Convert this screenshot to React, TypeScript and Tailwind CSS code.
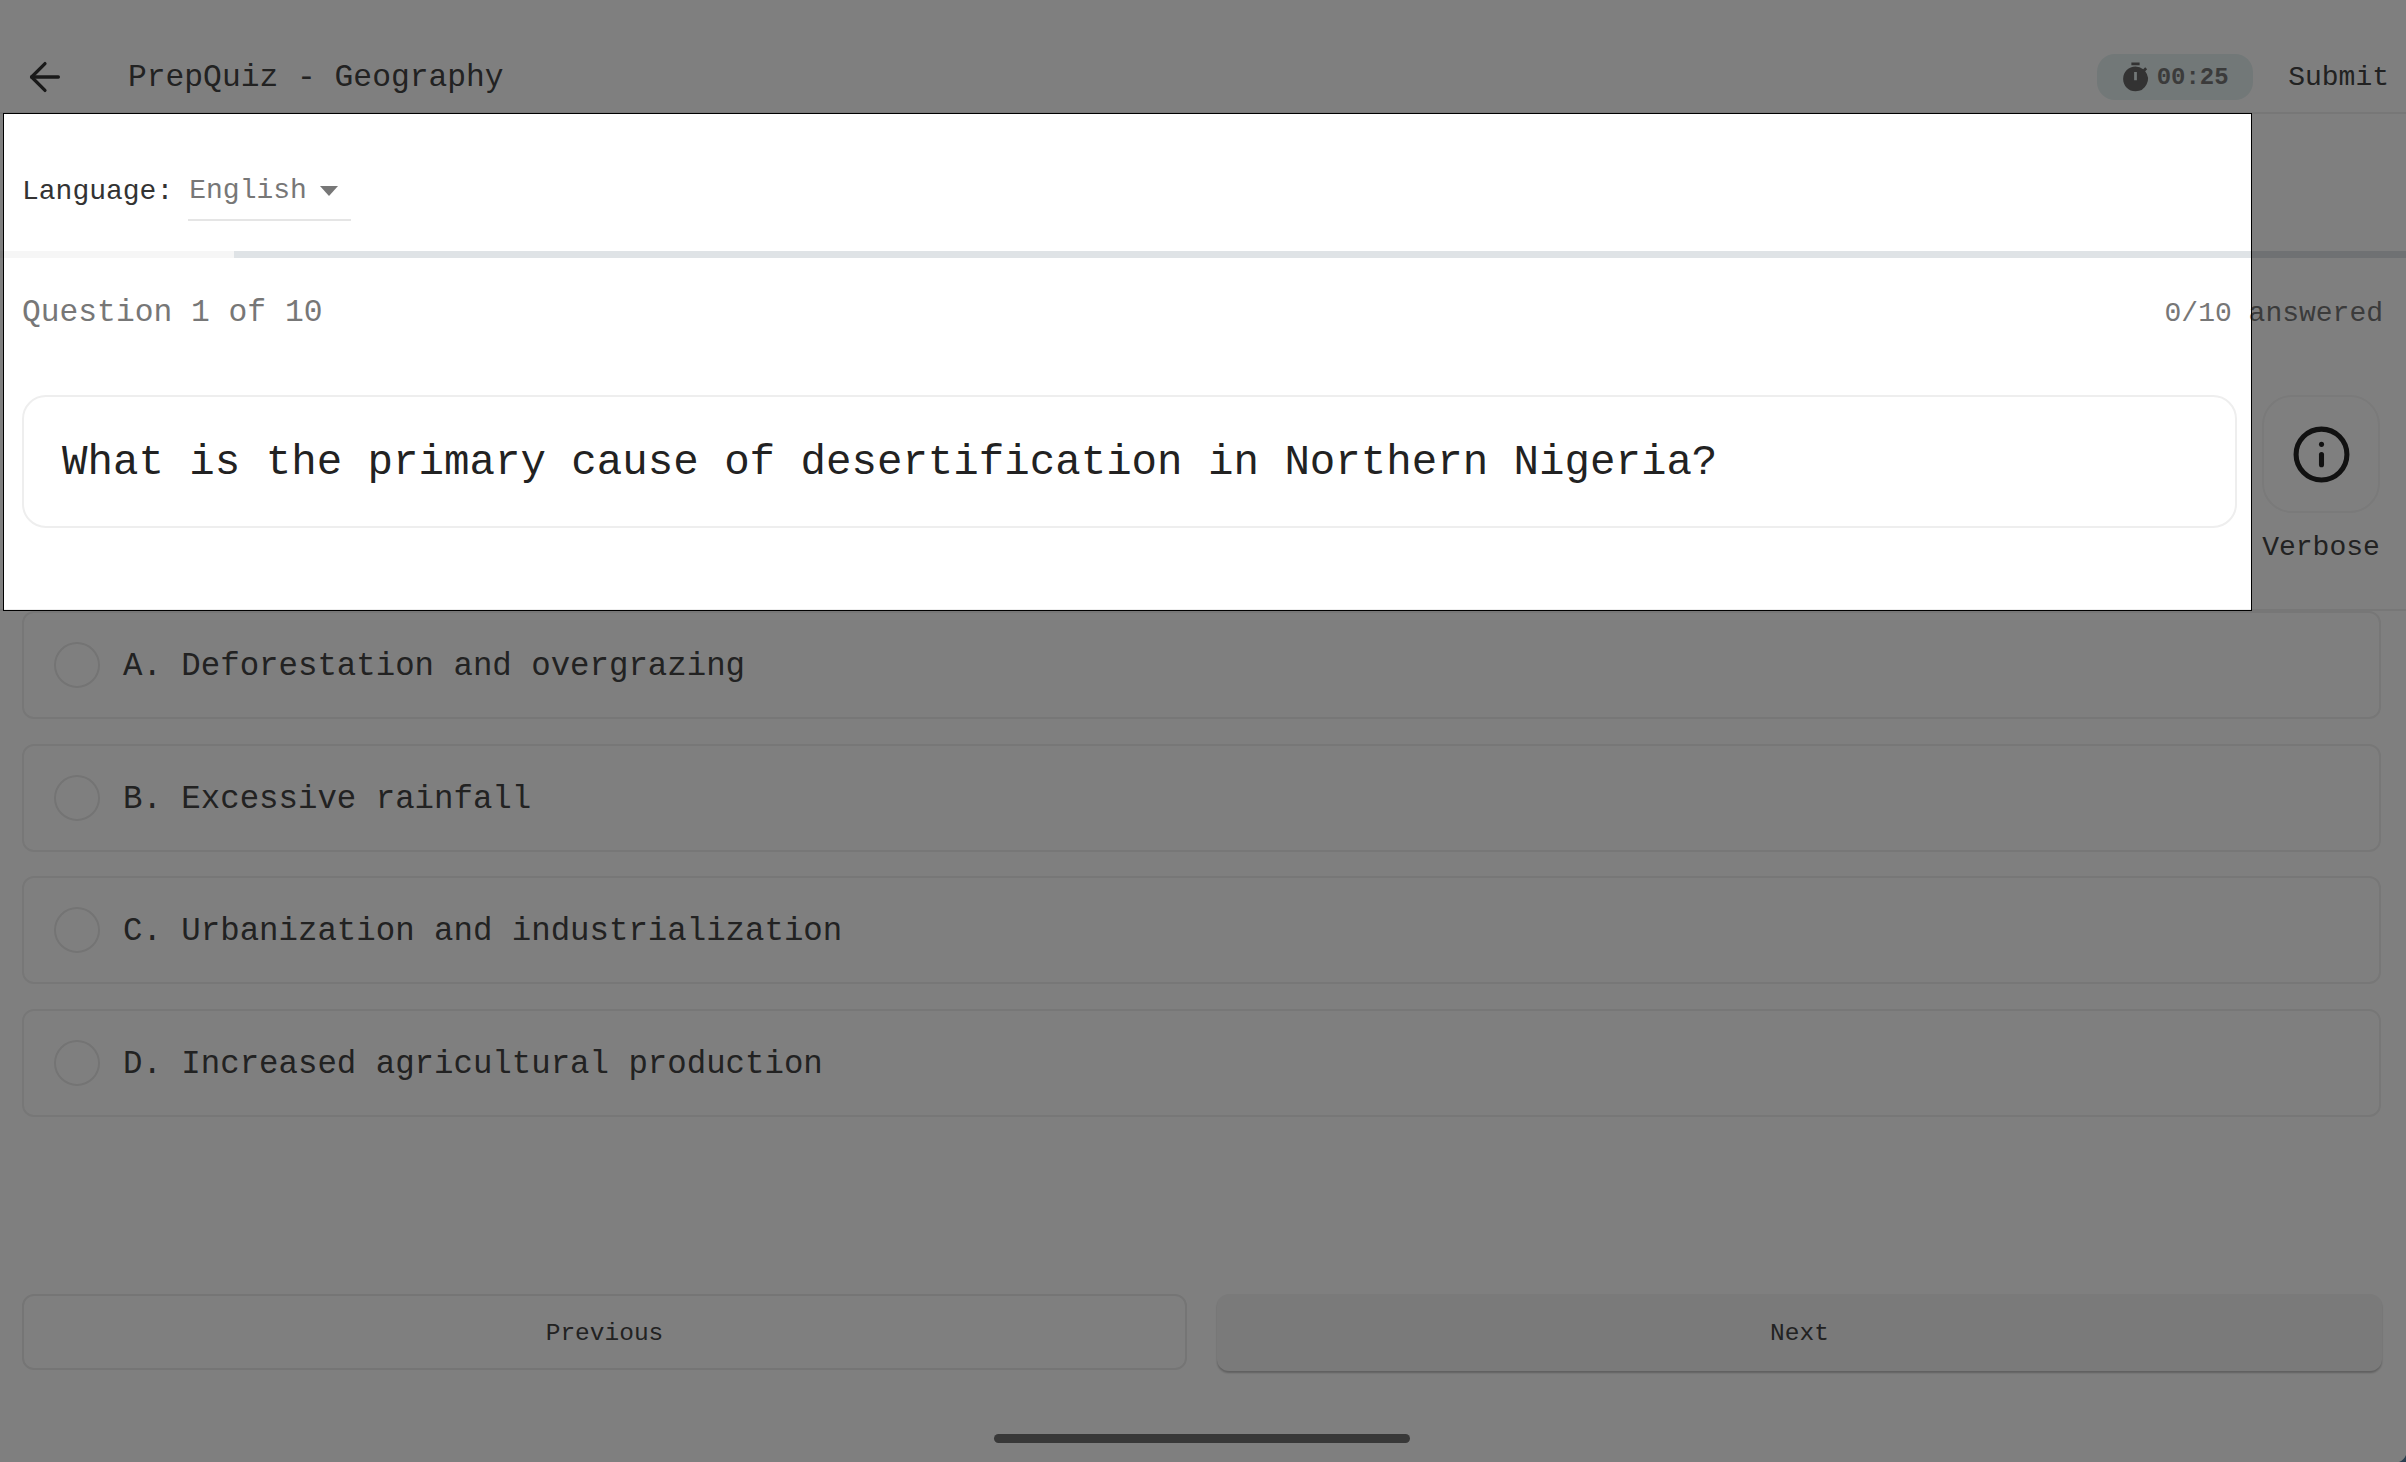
import { ArrowLeft, Info } from "lucide-react";
import { MdTimer } from "react-icons/md";

const OPTIONS = [
  "A. Deforestation and overgrazing",
  "B. Excessive rainfall",
  "C. Urbanization and industrialization",
  "D. Increased agricultural production",
];

export default function App() {
  return (
    <div className="relative h-[1462px] w-[2406px] overflow-hidden bg-white font-['Liberation_Mono',monospace] text-[#444]">
      <header className="flex h-[114px] items-center border-b-2 border-[#eee] pt-[42px] pl-[22px] pr-[17px]">
        <ArrowLeft size={46} strokeWidth={1.7} className="text-[#333]" />
        <h1 className="ml-[60px] pt-[3px] text-[31.3px]">PrepQuiz - Geography</h1>
        <div className="ml-auto flex h-[46px] w-[156px] items-center justify-center gap-[5px] rounded-[18px] bg-[#e4f0f0] pr-[3px]">
          <MdTimer size={33} className="text-[#666]" />
          <span className="pt-[2px] text-[24px] font-bold text-[#777]">00:25</span>
        </div>
        <button className="ml-[35px] pt-[2px] text-[28px]">Submit</button>
      </header>

      <section className="flex h-[137px] items-center gap-[15px] pl-[22px] pt-[19px]">
        <span className="text-[28px] text-[#333]">Language:</span>
        <div className="relative flex h-[58px] w-[163px] items-center border-b-2 border-[#e5e5e5] pl-[1px]">
          <span className="text-[28px] text-[#777]">English</span>
          <span className="ml-[13px] h-0 w-0 border-x-[9px] border-t-[10px] border-x-transparent border-t-[#777]" />
        </div>
      </section>

      <div className="h-[7px] w-full bg-[#dfe3e6]">
        <div className="h-full w-[234px] bg-[#f6f6f6]" />
      </div>

      <section className="flex h-[108px] items-center justify-between pl-[22px] pr-[23px] pt-[3px]">
        <span className="text-[31.3px] text-[#777]">Question 1 of 10</span>
        <span className="text-[28px] text-[#777]">0/10 answered</span>
      </section>

      <section className="flex h-[245px] gap-[25px] border-b-2 border-[#eee] pl-[22px] pr-[26px] pt-[29px]">
        <div className="flex h-[133px] flex-1 items-center rounded-[24px] border-2 border-[#eee] pl-[38px]">
          <p className="pt-[5px] text-[42.45px] text-[#222]">What is the primary cause of desertification in Northern Nigeria?</p>
        </div>
        <div className="flex w-[118px] flex-col items-center">
          <div className="flex h-[118px] w-[118px] items-center justify-center rounded-[30px] border-2 border-[#f4f4f4]">
            <Info size={61} strokeWidth={2} className="text-[#222]" />
          </div>
          <span className="mt-[18px] text-[28px] leading-[34px]">Verbose</span>
        </div>
      </section>

      <main className="flex flex-col gap-[24.5px] pl-[22px] pr-[25px]">
        {OPTIONS.map((option) => (
          <div key={option} className="flex h-[108px] items-center rounded-[12px] border-2 border-[#eee] pl-[30px]">
            <span className="h-[46px] w-[46px] rounded-full border-2 border-[#e8e8e8]" />
            <span className="ml-[23px] pt-[5px] text-[32.4px]">{option}</span>
          </div>
        ))}
      </main>

      <footer className="mt-[177px] grid grid-cols-2 gap-[30px] pl-[22px] pr-[24px]">
        <button className="flex h-[76px] items-center justify-center rounded-[12px] border-2 border-[#eaeaea] pt-[5px] text-[24.5px]">Previous</button>
        <button className="flex h-[77px] items-center justify-center rounded-[12px] bg-[#f4f4f4] pt-[5px] text-[24.5px] shadow-[0_2px_2px_rgba(0,0,0,0.25)]">Next</button>
      </footer>

      <div className="mx-auto mt-[63px] h-[9px] w-[416px] -translate-x-[1px] rounded-full bg-[#717171]" />

      {/* tour spotlight: the hole is the box, the dim layer is its shadow */}
      <div className="absolute left-[3px] top-[113px] h-[498px] w-[2249px] border border-black shadow-[0_0_0_3000px_rgba(0,0,0,0.5)]" />

      <svg className="absolute bottom-0 right-0" width="7" height="7" viewBox="0 0 7 7">
        <path d="M7 0V7H0C3 6 6 3 7 0Z" fill="#2d3f50" />
      </svg>
    </div>
  );
}
